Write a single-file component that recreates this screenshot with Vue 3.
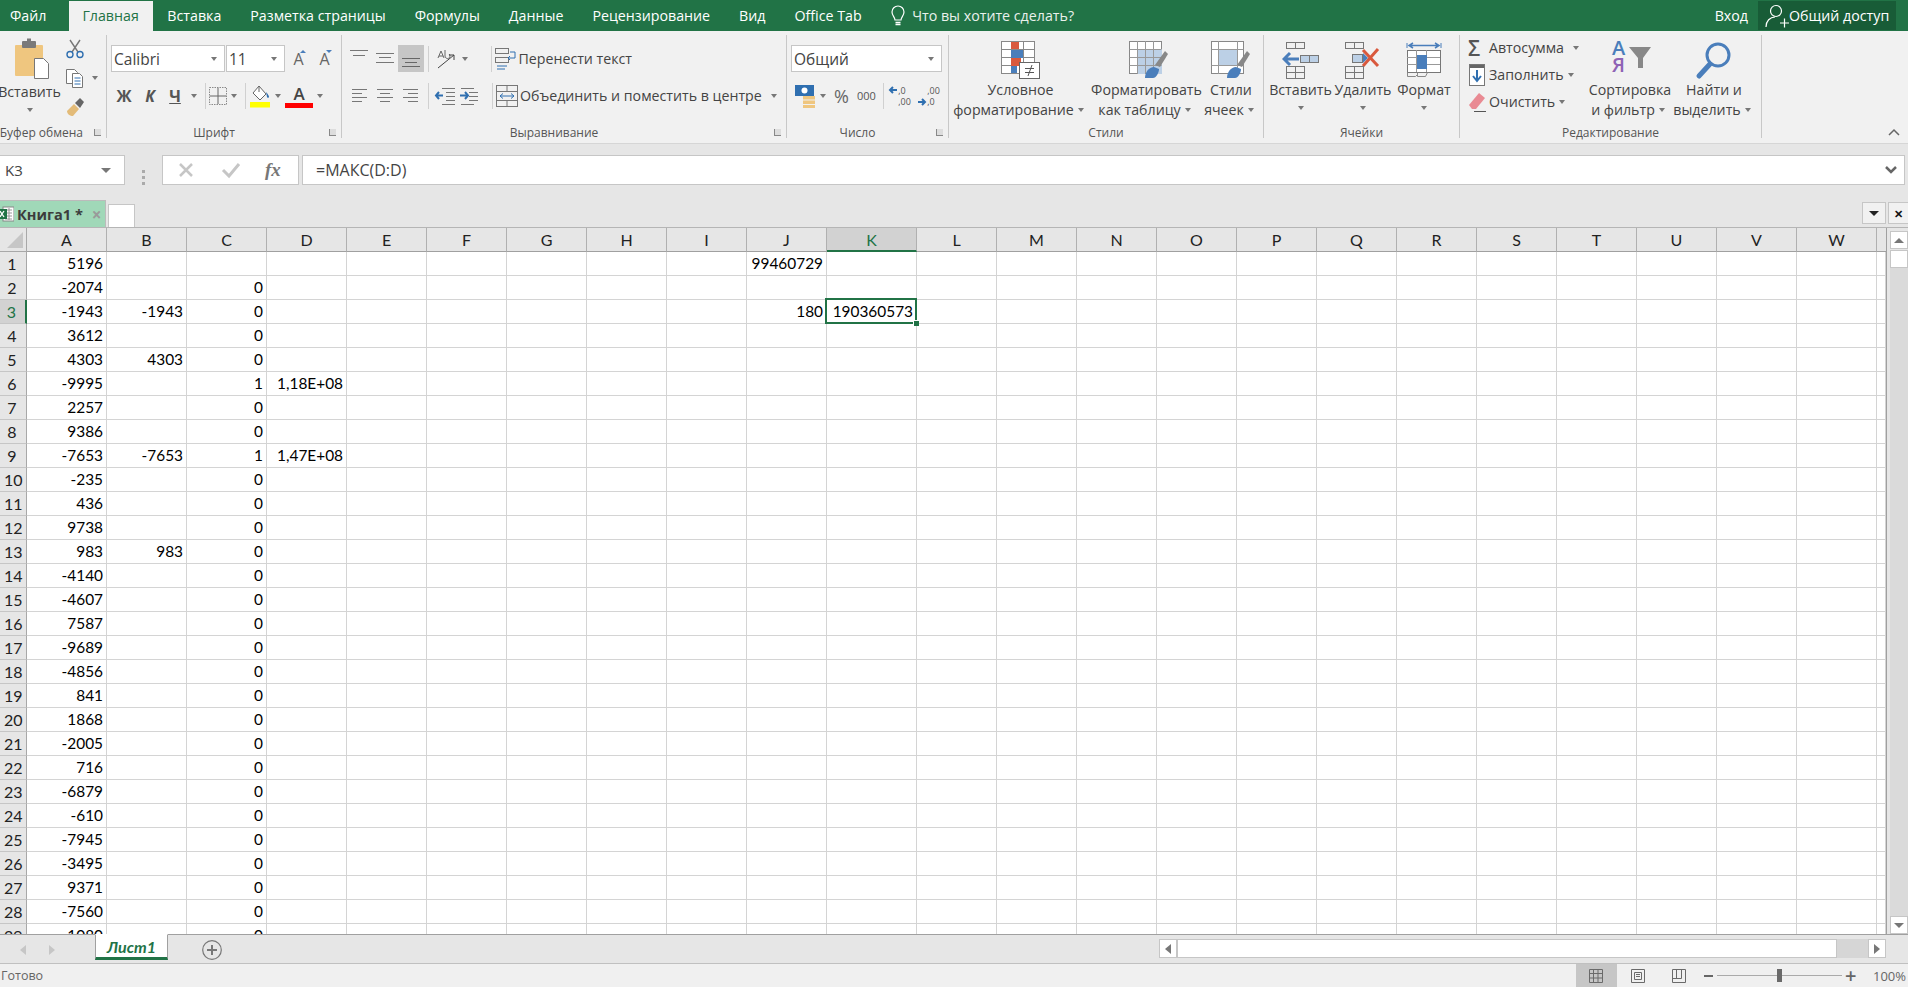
<template>
  <div class="app">
    <!-- title bar -->
    <div class="titlebar">
      <span class="tab first">Файл</span>
      <span class="tab active">Главная</span>
      <span class="tab">Вставка</span>
      <span class="tab">Разметка страницы</span>
      <span class="tab">Формулы</span>
      <span class="tab">Данные</span>
      <span class="tab">Рецензирование</span>
      <span class="tab">Вид</span>
      <span class="tab">Office Tab</span>
      <svg class="lamp" width="16" height="24" viewBox="0 0 16 24" fill="none" stroke="#fff" stroke-width="1.2">
        <path d="M5 16c0-3-3-4-3-8a6 6 0 0 1 12 0c0 4-3 5-3 8z" />
        <path d="M5.5 18.5h5M5.5 20.5h5" stroke-width="1.6" />
      </svg>
      <span class="tell">Что вы хотите сделать?</span>
      <span class="login">Вход</span>
      <div class="share">
        <svg width="24" height="26" viewBox="0 0 24 26" fill="none" stroke="#fff" stroke-width="1.2">
          <circle cx="11" cy="8" r="5.5" />
          <path d="M1 24c0-6 4-10 9-10M15 20h9M19.5 15.5v9" />
        </svg>
        <span>Общий доступ</span>
      </div>
    </div>

    <!-- ribbon -->
    <div class="ribbon">
      <section class="group g-clip">
        <div class="body row-body">
          <div class="big paste">
            <svg width="59" height="42" viewBox="0 0 59 42">
              <rect x="15" y="8" width="28" height="31" rx="1" fill="#efc67f" />
              <rect x="22" y="4" width="14" height="7" rx="1" fill="#7a7a7a" />
              <rect x="27" y="1.500" width="4" height="4" fill="#7a7a7a" />
              <path d="M34.500 21.500h9l5 5v15h-14z" fill="#fff" stroke="#777" />
            </svg>
            <span class="lbl">Вставить</span>
            <i class="caret under"></i>
          </div>
          <div class="clip-tools">
            <svg width="20" height="20" viewBox="0 0 20 20" fill="none" stroke-width="1.4">
              <path d="M5 1l8 12M15 1L7 13" stroke="#777" />
              <circle cx="5" cy="15.500" r="3" stroke="#2f6fb0" />
              <circle cx="15" cy="15.500" r="3" stroke="#2f6fb0" />
            </svg>
            <div class="clip-copy">
              <svg width="20" height="20" viewBox="0 0 20 20" fill="#fff" stroke="#777">
                <path d="M1.500 1.500h8l3 3v11h-11z" />
                <path d="M7.500 5.500h7l3 3v11h-10z" />
                <path d="M9.500 10h6M9.500 13h6M9.500 16h6" stroke="#2f6fb0" />
              </svg>
              <i class="caret"></i>
            </div>
            <svg width="20" height="20" viewBox="0 0 20 20">
              <path d="M2 14l7-7 5 5-6 7c-3 0-6-2-6-5z" fill="#e3bb78" />
              <path d="M10 6l5-5 4 4-4 6z" fill="#666" />
            </svg>
          </div>
        </div>
        <div class="glabel"><span class="clip-name">Буфер обмена</span><i class="launcher"></i></div>
      </section>

      <section class="group g-font">
        <div class="body pad">
          <div class="line">
            <div class="combo font-name"><span>Calibri</span><i class="caret"></i></div>
            <div class="combo font-size"><span>11</span><i class="caret"></i></div>
            <span class="grow-a up">A</span>
            <span class="grow-a down">A</span>
          </div>
          <div class="line second">
            <b class="fmt">Ж</b>
            <b class="fmt it">К</b>
            <b class="fmt un">Ч</b>
            <i class="caret"></i>
            <i class="vsep"></i>
            <svg width="18" height="20" viewBox="0 0 18 20" fill="none" stroke="#8a8a8a" stroke-dasharray="1.500 1">
              <rect x=".5" y="1.500" width="17" height="17" />
              <path d="M9 2v16M1 10h16" stroke="#666" stroke-dasharray="none" />
            </svg>
            <i class="caret"></i>
            <i class="vsep"></i>
            <svg width="22" height="24" viewBox="0 0 22 24">
              <path d="M10 2l7 8-6 6-7-7z" fill="#fff" stroke="#666" />
              <path d="M10 2v6" stroke="#666" />
              <path d="M17 8c2 2 3 4 3 5s-2 1-2 0z" fill="#2f6fb0" />
              <rect x="1" y="18" width="20" height="5.500" fill="#ff0" />
            </svg>
            <i class="caret"></i>
            <span class="font-color">A</span>
            <i class="caret"></i>
          </div>
        </div>
        <div class="glabel shift">Шрифт<i class="launcher"></i></div>
      </section>

      <section class="group g-align">
        <div class="body pad">
          <div class="line">
            <svg width="26" height="27" viewBox="0 0 26 27" stroke="#777"><path d="M4 5.500h18M7 10.500h12" /></svg>
            <svg width="26" height="27" viewBox="0 0 26 27" stroke="#777"><path d="M4 8.500h18M7 12.500h12M4 17.500h18" /></svg>
            <svg class="on" width="26" height="27" viewBox="0 0 26 27" stroke="#666"><path d="M4 13.500h18M7 17.500h12M4 21.500h18" /></svg>
            <i class="vsep ab-sep"></i>
            <svg width="24" height="24" viewBox="0 0 24 24" fill="none" stroke="#777">
              <path d="M4 11l3-7 3 7M5 9h4M11 3v6a2.500 2.500 0 1 0 4-2" stroke="#666" />
              <path d="M4 21L20 8M15 8h5v5" stroke="#444" />
            </svg>
            <i class="caret"></i>
            <i class="vsep wide"></i>
            <svg width="22" height="24" viewBox="0 0 22 24" fill="none" stroke="#777">
              <rect x=".5" y="1.500" width="13" height="5" />
              <rect x=".5" y="10.500" width="13" height="5" />
              <path d="M2 19h10M2 22h8" stroke="#2f6fb0" />
              <path d="M15 5h5v6h-7M15 9l-2 2 2 2" stroke="#2f6fb0" />
            </svg>
            <span class="lbl al-text">Перенести текст</span>
          </div>
          <div class="line second">
            <svg width="26" height="27" viewBox="0 0 26 27" stroke="#777"><path d="M6 7.500h15M6 11.500h10M6 15.500h15M6 19.500h10" /></svg>
            <svg width="26" height="27" viewBox="0 0 26 27" stroke="#777"><path d="M5 7.500h16M8 11.500h10M5 15.500h16M8 19.500h10" /></svg>
            <svg width="26" height="27" viewBox="0 0 26 27" stroke="#777"><path d="M5 7.500h15M10 11.500h10M5 15.500h15M10 19.500h10" /></svg>
            <i class="vsep"></i>
            <svg width="26" height="27" viewBox="0 0 26 27" fill="none">
              <path d="M10 6.500h13M14 10.500h9M14 14.500h9M14 18.500h9M10 22.500h13" stroke="#777" />
              <path d="M11 13.500H4M7 10l-3 3.500L7 17" stroke="#2f6fb0" stroke-width="2" />
            </svg>
            <svg width="26" height="27" viewBox="0 0 26 27" fill="none">
              <path d="M3 6.500h13M3 22.500h13M11 10.500h9M11 14.500h9M11 18.500h9" stroke="#777" />
              <path d="M2 13.500h8M7 10l3 3.500L7 17" stroke="#2f6fb0" stroke-width="2" />
            </svg>
            <i class="vsep wide2"></i>
            <svg width="22" height="24" viewBox="0 0 22 24" fill="none" stroke="#777">
              <rect x=".5" y="1.500" width="21" height="21" />
              <path d="M1 7.500h20M1 16.500h20M11 1v6M11 17v6" />
              <path d="M4 12h14M7 9.500L4 12l3 2.500M15 9.500l3 2.500-3 2.500" stroke="#2f6fb0" />
            </svg>
            <span class="lbl al-text">Объединить и поместить в центре</span>
            <i class="caret merge-caret"></i>
          </div>
        </div>
        <div class="glabel shift">Выравнивание<i class="launcher"></i></div>
      </section>

      <section class="group g-num">
        <div class="body pad">
          <div class="line">
            <div class="combo num-format"><span>Общий</span><i class="caret"></i></div>
          </div>
          <div class="line second">
            <svg class="money" width="22" height="24" viewBox="0 0 22 24">
              <rect x="1" y="1" width="19" height="11" fill="#2f6fb0" />
              <circle cx="10.500" cy="6.500" r="3" fill="#fff" />
              <rect x="9" y="12" width="12" height="3.500" fill="#efc67f" />
              <rect x="9" y="16.500" width="12" height="3.500" fill="#efc67f" />
              <rect x="9" y="21" width="12" height="3" fill="#efc67f" />
            </svg>
            <i class="caret"></i>
            <span class="percent">%</span>
            <span class="thousand">000</span>
            <i class="vsep num-sep"></i>
            <div class="dec">
              <svg width="10" height="10" viewBox="0 0 10 10" fill="none" stroke="#2f6fb0" stroke-width="2"><path d="M9 5H2M5 2L2 5l3 3" /></svg>
              <span class="dec-text">,0<br />,00</span>
            </div>
            <div class="dec right">
              <svg width="10" height="10" viewBox="0 0 10 10" fill="none" stroke="#2f6fb0" stroke-width="2"><path d="M1 5h7M5 2l3 3-3 3" /></svg>
              <span class="dec-text">,00<br />,0</span>
            </div>
          </div>
        </div>
        <div class="glabel shift">Число<i class="launcher"></i></div>
      </section>

      <section class="group g-styles">
        <div class="body row-body">
          <div class="big w143">
            <svg width="40" height="38" viewBox="0 0 40 38">
              <g fill="none" stroke="#888">
                <rect x=".5" y=".5" width="33" height="32" fill="#fff" />
                <path d="M.5 8.500h33M.5 16.500h33M.5 24.500h33M11.500 0v33M22.500 0v33" />
              </g>
              <rect x="10" y="1" width="8" height="7" fill="#d9593d" />
              <rect x="10" y="9" width="12" height="8" fill="#4a7ebb" />
              <rect x="10" y="17" width="10" height="8" fill="#d9593d" />
              <rect x="10" y="25" width="6" height="7" fill="#4a7ebb" />
              <rect x="18.500" y="21.500" width="20" height="16" fill="#fff" stroke="#666" />
              <path d="M24 27.500h9M24 31.500h9M31 24l-4 11" stroke="#555" fill="none" />
            </svg>
            <span class="lbl">Условное</span>
            <span class="lbl">форматирование<i class="caret"></i></span>
          </div>
          <div class="big w109">
            <svg class="nudge" width="40" height="38" viewBox="0 0 40 38">
              <g fill="#fff" stroke="#888">
                <rect x=".5" y=".5" width="32" height="32" />
              </g>
              <rect x="9" y="8" width="24" height="25" fill="#bcd0e6" />
              <path d="M.5 8.500h32M.5 16.500h32M.5 24.500h32M8.500 0v33M16.500 0v33M24.500 0v33" stroke="#999" fill="none" />
              <path d="M26 24l10-14 3 3-8 13z" fill="#888" />
              <path d="M16 37c0-6 4-11 9-11l5 2c0 4-3 9-6 9z" fill="#4a7ebb" />
            </svg>
            <span class="lbl">Форматировать</span>
            <span class="lbl">как таблицу<i class="caret"></i></span>
          </div>
          <div class="big w60">
            <svg width="40" height="38" viewBox="0 0 40 38">
              <rect x=".5" y=".5" width="32" height="32" fill="#fff" stroke="#888" />
              <rect x="7" y="8" width="20" height="17" fill="#bcd0e6" />
              <path d="M.5 8.500h32M.5 24.500h32M7.500 0v33M26.500 0v33" stroke="#999" fill="none" />
              <path d="M26 24l10-14 3 3-8 13z" fill="#888" />
              <path d="M16 37c0-6 4-11 9-11l5 2c0 4-3 9-6 9z" fill="#4a7ebb" />
            </svg>
            <span class="lbl">Стили</span>
            <span class="lbl">ячеек<i class="caret"></i></span>
          </div>
        </div>
        <div class="glabel">Стили</div>
      </section>

      <section class="group g-cells">
        <div class="body row-body">
          <div class="big w61">
            <svg width="38" height="38" viewBox="0 0 38 38" fill="none">
              <rect x="4.500" y="1.500" width="18" height="6" stroke="#777" />
              <path d="M13.500 1v6" stroke="#777" />
              <rect x="18.500" y="14.500" width="18" height="7" fill="#bcd0e6" stroke="#777" />
              <path d="M27.500 14v7" stroke="#777" />
              <path d="M17 18H2M8 12l-6 6 6 6" stroke="#4a7ebb" stroke-width="3" />
              <rect x="4.500" y="25.500" width="18" height="12" stroke="#777" />
              <path d="M4 31.500h19M13.500 25v12" stroke="#777" />
            </svg>
            <span class="lbl">Вставить</span>
            <i class="caret under"></i>
          </div>
          <div class="big w64">
            <svg width="38" height="38" viewBox="0 0 38 38" fill="none">
              <rect x="1.500" y="1.500" width="18" height="6" stroke="#777" />
              <path d="M10.500 1v6" stroke="#777" />
              <rect x="8.500" y="13.500" width="10" height="8" fill="#bcd0e6" stroke="#777" />
              <path d="M19 12l5 5-5 5z" fill="#4a7ebb" />
              <path d="M19 9l15 16M34 8L19 25" stroke="#d9593d" stroke-width="3" />
              <rect x="1.500" y="25.500" width="18" height="12" stroke="#777" />
              <path d="M1 31.500h19M10.500 25v12" stroke="#777" />
            </svg>
            <span class="lbl">Удалить</span>
            <i class="caret under"></i>
          </div>
          <div class="big w58">
            <svg width="38" height="38" viewBox="0 0 38 38" fill="none">
              <path d="M2 2v5M36 2v5" stroke="#4a7ebb" />
              <path d="M4 4.500h30M8 2L4 4.500 8 7M30 2l4 2.500L30 7" stroke="#4a7ebb" stroke-width="1.500" />
              <rect x="2.500" y="9.500" width="33" height="22" fill="#fff" stroke="#777" />
              <path d="M2 16.500h33M2 23.500h33M11.500 9v22M21.500 9v22" stroke="#999" />
              <rect x="12" y="14" width="10" height="14" fill="#4a7ebb" />
              <path d="M2.500 31.500v4h8l2-2v-2M12.500 33.500v2h8l2-4" stroke="#888" />
            </svg>
            <span class="lbl">Формат</span>
            <i class="caret under"></i>
          </div>
        </div>
        <div class="glabel">Ячейки</div>
      </section>

      <section class="group g-edit">
        <div class="body row-body">
          <div class="edit-col">
            <div class="edit-row">
              <span class="sigma">Σ</span>
              <span class="lbl">Автосумма</span>
              <i class="caret sum-caret"></i>
            </div>
            <div class="edit-row">
              <svg width="16" height="22" viewBox="0 0 16 22" fill="none">
                <rect x=".5" y=".5" width="15" height="21" fill="#fff" stroke="#777" />
                <rect x="1" y="1" width="14" height="3" fill="#666" />
                <path d="M8 6v10M4 12l4 5 4-5" stroke="#2f6fb0" stroke-width="2" />
              </svg>
              <span class="lbl">Заполнить<i class="caret"></i></span>
            </div>
            <div class="edit-row">
              <svg width="18" height="20" viewBox="0 0 18 20">
                <path d="M1 13L11 1l6 5L8 17H4z" fill="#e98a93" />
                <path d="M6 19.500h12" stroke="#555" />
              </svg>
              <span class="lbl">Очистить<i class="caret"></i></span>
            </div>
          </div>
          <div class="big w90">
            <div class="sort-icon">
              <span class="sort-a">А</span>
              <span class="sort-z">Я</span>
              <svg width="22" height="21" viewBox="0 0 22 21">
                <path d="M0 0h22l-8 11v10H9V11z" fill="#888" />
              </svg>
            </div>
            <span class="lbl">Сортировка</span>
            <span class="lbl">и фильтр<i class="caret"></i></span>
          </div>
          <div class="big w78">
            <svg width="40" height="38" viewBox="0 0 40 38" fill="none">
              <circle cx="24" cy="14" r="11" stroke="#4a7ebb" stroke-width="3" />
              <path d="M16 23L5 35" stroke="#4a7ebb" stroke-width="5" stroke-linecap="round" />
            </svg>
            <span class="lbl">Найти и</span>
            <span class="lbl">выделить<i class="caret"></i></span>
          </div>
        </div>
        <div class="glabel">Редактирование</div>
      </section>

      <svg class="collapse" width="12" height="8" viewBox="0 0 12 8" fill="none" stroke="#666" stroke-width="1.500">
        <path d="M1 7l5-5 5 5" />
      </svg>
    </div>

    <!-- formula bar -->
    <div class="formula">
      <div class="namebox"><span>K3</span><i class="caret dark"></i></div>
      <div class="dots"><i></i><i></i><i></i></div>
      <div class="fx-box">
        <svg width="18" height="18" viewBox="0 0 18 18" fill="none" stroke="#c6c6c6" stroke-width="2.500">
          <path d="M3 3l12 12M15 3L3 15" />
        </svg>
        <svg width="20" height="18" viewBox="0 0 20 18" fill="none" stroke="#c6c6c6" stroke-width="3">
          <path d="M2 9l6 6L18 3" />
        </svg>
        <span class="fx">fx</span>
      </div>
      <div class="input">
        <span>=МАКС(D:D)</span>
        <svg width="14" height="10" viewBox="0 0 14 10" fill="none" stroke="#666" stroke-width="2.500">
          <path d="M2 2l5 5 5-5" />
        </svg>
      </div>
    </div>

    <!-- workbook tabs -->
    <div class="doctabs">
      <div class="doc">
        <svg width="14" height="16" viewBox="0 0 14 16">
          <rect x="3" y="1" width="11" height="14" fill="#fff" stroke="#888" />
          <path d="M5 4h7M5 7h7M5 10h7M5 13h7M9 2v12" stroke="#999" />
          <rect x="-3" y="3" width="10" height="10" fill="#217346" />
          <path d="M0 5l4 6M4 5l-4 6" stroke="#fff" stroke-width="1.300" />
        </svg>
        <b>Книга1 *</b>
        <span class="doc-close">×</span>
      </div>
      <div class="doc-new"></div>
      <div class="doc-btn down"><i class="caret black"></i></div>
      <div class="doc-btn close">✕</div>
    </div>

    <!-- sheet -->
    <div class="sheet">
      <div class="grid">
        <div class="corner"><i></i></div>
        <div
          v-for="col in columns"
          :key="col"
          class="colhead"
          :class="{ current: col === 'K' }"
        >{{ col }}</div>
        <div class="colhead tail"></div>
        <template v-for="row in rowCount" :key="row">
          <div class="rowhead" :class="{ current: row === 3 }">{{ row }}</div>
          <div
            v-for="col in columns"
            :key="col"
            class="cell"
            :class="{ selected: col === 'K' && row === 3 }"
          >{{ cellText(col, row) }}</div>
          <div class="cell"></div>
        </template>
      </div>
      <div class="vscroll">
        <div class="sbtn"><i class="tri up"></i></div>
        <div class="vthumb"></div>
        <div class="vtrack"></div>
        <div class="sbtn"><i class="tri dn"></i></div>
      </div>
    </div>

    <!-- sheet tabs -->
    <div class="tabsbar">
      <i class="nav left"></i>
      <i class="nav right"></i>
      <div class="sheettab">Лист1</div>
      <div class="addsheet">
        <svg width="20" height="20" viewBox="0 0 20 20" fill="none" stroke="#777">
          <circle cx="10" cy="10" r="9.300" stroke-width="1.200" />
          <path d="M5 10h10M10 5v10" stroke-width="2" />
        </svg>
      </div>
      <div class="hscroll">
        <div class="sbtn h"><i class="nav left dark"></i></div>
        <div class="hthumb"></div>
        <div class="htrack"></div>
        <div class="sbtn h"><i class="nav right dark"></i></div>
      </div>
    </div>

    <!-- status bar -->
    <div class="status">
      <span class="ready">Готово</span>
      <div class="view on">
        <svg width="14" height="14" viewBox="0 0 14 14" fill="none" stroke="#6a6a6a"><path d="M.5.5h13v13H.5zM.5 4.500h13M.5 9h13M4.500 0v14M9 0v14" /></svg>
      </div>
      <div class="view">
        <svg width="14" height="14" viewBox="0 0 14 14" fill="none" stroke="#6a6a6a"><path d="M.5.5h13v13H.5zM3.500 3.500h7v7h-7zM5 5.500h4M5 7.500h4" /></svg>
      </div>
      <div class="view">
        <svg width="14" height="14" viewBox="0 0 14 14" fill="none" stroke="#6a6a6a"><path d="M.5.5h13v13H.5zM.5 9.500h9v-9M4.500 0v9" /></svg>
      </div>
      <div class="zoom">
        <i class="minus"></i>
        <div class="slider"><i></i></div>
        <span class="plus">+</span>
      </div>
      <span class="percent-zoom">100%</span>
    </div>
  </div>
</template>

<script setup>
const columns = 'ABCDEFGHIJKLMNOPQRSTUVW'.split('');
const rowCount = 29;

const colA = [
  5196, -2074, -1943, 3612, 4303, -9995, 2257, 9386, -7653, -235, 436, 9738, 983, -4140, -4607,
  7587, -9689, -4856, 841, 1868, -2005, 716, -6879, -610, -7945, -3495, 9371, -7560, -1080,
];
const sparse = {
  B: { 3: -1943, 5: 4303, 9: -7653, 13: 983 },
  D: { 6: '1,18E+08', 9: '1,47E+08' },
  J: { 1: 99460729, 3: 180 },
  K: { 3: 190360573 },
};

const cellText = (col, row) => {
  if (col === 'A') return colA[row - 1];
  if (col === 'C') {
    if (row === 1) return '';
    return row === 6 || row === 9 ? 1 : 0;
  }
  return sparse[col]?.[row] ?? '';
};
</script>

<style>
html,
body {
  margin: 0;
  overflow: hidden;
  background: #f1f1f1;
}
</style>

<style scoped>
.app {
  width: 1908px;
  height: 987px;
  display: flex;
  flex-direction: column;
  overflow: hidden;
  font-family: "Open Sans", "Noto Sans", sans-serif;
  font-size: 14.2px;
  color: #444;
}

i {
  display: block;
  font-style: normal;
}

/* title bar */
.titlebar {
  height: 31px;
  flex: none;
  display: flex;
  align-items: center;
  background: #217346;
  color: #fff;
  font-size: 14.23px;
}

.tab {
  height: 31px;
  line-height: 32px;
  padding: 0 14.5px;
  white-space: nowrap;
}

.tab.first {
  padding: 0 23px 0 10px;
}

.tab.active {
  background: #f1f1f1;
  color: #217346;
  height: 30px;
  margin-top: 1px;
  line-height: 30px;
  padding: 0 14px 0 13px;
}

.lamp {
  margin-left: 14px;
}

.tell {
  margin-left: 6px;
  opacity: 0.9;
}

.login {
  margin-left: auto;
}

.share {
  margin: 0 12px 0 10px;
  height: 29px;
  width: 138px;
  padding-left: 7px;
  box-sizing: border-box;
  display: flex;
  align-items: center;
  background: #185c37;
  white-space: nowrap;
}

/* ribbon */
.ribbon {
  height: 113px;
  flex: none;
  box-sizing: border-box;
  padding: 4px 0 5px;
  display: flex;
  position: relative;
  background: #f1f1f1;
  border-bottom: 1px solid #d6d6d6;
}

.group {
  box-sizing: border-box;
  border-right: 1px solid #c8c8c8;
  display: flex;
  flex-direction: column;
  flex: none;
}

.g-clip { width: 107px; }
.g-font { width: 235px; }
.g-align { width: 445px; }
.g-num { width: 162px; }
.g-styles { width: 315px; }
.g-cells { width: 196px; }
.g-edit { width: 302px; }

.body {
  flex: 1;
  min-height: 0;
}

.row-body {
  display: flex;
}

.pad {
  padding-top: 10px;
}

.glabel {
  height: 16px;
  line-height: 16px;
  margin-bottom: -3px;
  position: relative;
  text-align: center;
  font-size: 12px;
  color: #555;
  white-space: nowrap;
}

.glabel.shift {
  padding-right: 20px;
}

.launcher {
  position: absolute;
  right: 5px;
  top: 4px;
  width: 6px;
  height: 6px;
  border-left: 1px solid #888;
  border-bottom: 1px solid #888;
  background: #ddd;
}

.clip-name {
  position: absolute;
  right: 23px;
}

.line {
  display: flex;
  align-items: center;
  height: 27px;
}

.line.second {
  margin-top: 10px;
}

.caret {
  flex: none;
  width: 0;
  height: 0;
  margin: 0 4px;
  border-left: 3.500px solid transparent;
  border-right: 3.500px solid transparent;
  border-top: 4px solid #777;
}

.caret.under {
  margin-top: 6px;
}

.caret.dark {
  border-left-width: 5px;
  border-right-width: 5px;
  border-top-width: 5px;
  border-top-color: #777;
}

.caret.black {
  border-top-color: #222;
  border-left-width: 5px;
  border-right-width: 5px;
  border-top-width: 5px;
}

.vsep {
  flex: none;
  width: 1px;
  height: 26px;
  margin: 0 3.500px;
  background: #d0d0d0;
}

.big {
  flex: none;
  display: flex;
  flex-direction: column;
  align-items: center;
  padding-top: 5px;
}

.big > svg,
.sort-icon {
  height: 40px;
  flex: none;
}

.big .lbl {
  line-height: 20px;
  white-space: nowrap;
  display: flex;
  align-items: center;
}

.nudge {
  margin-left: 4px;
}

.lbl {
  white-space: nowrap;
}

.w143 { width: 143px; }
.w109 { width: 109px; }
.w60 { width: 60px; }
.w61 { width: 61px; margin-left: 6px; }
.w64 { width: 64px; }
.w58 { width: 58px; }
.w90 { width: 90px; }
.w78 { width: 78px; }

/* clipboard */
.paste {
  width: 59px;
  padding-top: 2px;
}

.paste > svg {
  height: 42px;
}

.paste .lbl {
  margin-top: 3px;
}

.clip-tools {
  margin: 4px 0 0 6px;
  display: flex;
  flex-direction: column;
  gap: 9px;
}

.clip-copy {
  display: flex;
  align-items: center;
  gap: 3px;
}

/* font group */
.g-font .line {
  padding-left: 4px;
}

.combo {
  box-sizing: border-box;
  height: 27px;
  display: flex;
  align-items: center;
  justify-content: space-between;
  padding: 0 3px 0 2px;
  background: #fff;
  border: 1px solid #c6c6c6;
  font-size: 15.5px;
}

.font-name {
  width: 114px;
  margin-right: 1px;
}

.font-size {
  width: 59px;
}

.grow-a {
  width: 25px;
  margin-left: 1px;
  font-size: 16px;
  text-align: center;
  color: #666;
  position: relative;
}

.grow-a::after {
  content: "";
  position: absolute;
  top: 2px;
  right: 5px;
  border-left: 3px solid transparent;
  border-right: 3px solid transparent;
}

.grow-a.up::after {
  border-bottom: 3px solid #4a7ebb;
}

.grow-a.down::after {
  border-top: 3px solid #4a7ebb;
}

.fmt {
  width: 26px;
  text-align: center;
  font-size: 16px;
  color: #555;
}

.fmt.it {
  font-style: italic;
}

.fmt.un {
  width: 24px;
  text-decoration: underline;
}

.font-color {
  width: 28px;
  text-align: center;
  font-size: 17px;
  font-weight: 600;
  line-height: 20px;
  color: #444;
  border-bottom: 5px solid #f00;
  box-sizing: border-box;
  height: 24px;
}

/* alignment */
.g-align .line {
  padding-left: 4px;
}

.on {
  background: #c6c6c6;
}

.vsep.ab-sep {
  margin-right: 5px;
}

.vsep.wide {
  margin: 0 3px 0 19px;
}

.vsep.wide2 {
  margin: 0 3px 0 8px;
}

.al-text {
  margin-left: 2px;
}

.merge-caret {
  margin-left: 9px;
}

/* number */
.g-num .line {
  padding-left: 4px;
}

.num-format {
  width: 151px;
}

.money {
  margin-left: 3px;
}

.percent {
  margin-left: 4px;
  font-size: 18px;
  color: #666;
}

.thousand {
  margin-left: 8px;
  font-size: 11px;
  color: #555;
}

.vsep.num-sep {
  margin-left: 7px;
}

.dec {
  display: flex;
  align-items: flex-start;
  width: 24px;
  margin-left: 1px;
}

.dec.right {
  align-items: flex-end;
  margin-left: 5px;
}

.dec-text {
  font-size: 9px;
  line-height: 11px;
  color: #555;
}

/* editing */
.edit-col {
  width: 125px;
  box-sizing: border-box;
  padding-left: 8px;
  margin-top: -1px;
  flex: none;
}

.edit-row {
  height: 27px;
  display: flex;
  align-items: center;
}

.edit-row > svg,
.sigma {
  width: 18px;
  flex: none;
}

.edit-row .lbl {
  margin-left: 3px;
  display: flex;
  align-items: center;
}

.sigma {
  font-size: 21px;
  font-weight: 600;
  line-height: 20px;
  color: #555;
}

.sum-caret {
  margin-left: 9px;
}

.sort-icon {
  width: 40px;
  position: relative;
}

.sort-icon svg {
  position: absolute;
  left: 19px;
  top: 7px;
}

.sort-a,
.sort-z {
  position: absolute;
  left: 2px;
  font-size: 20px;
  line-height: 17px;
  font-weight: 600;
}

.sort-a {
  top: -1px;
  color: #4a7ebb;
}

.sort-z {
  top: 16px;
  color: #8e63b5;
}

.collapse {
  position: absolute;
  right: 8px;
  top: 97px;
}

/* formula bar */
.formula {
  height: 56px;
  flex: none;
  box-sizing: border-box;
  padding: 11px 3px 0 0;
  display: flex;
  background: #e6e6e6;
}

.namebox,
.fx-box,
.input {
  box-sizing: border-box;
  height: 30px;
  background: #fff;
  border: 1px solid #c6c6c6;
  display: flex;
  align-items: center;
}

.namebox {
  width: 125px;
  padding: 0 9px 0 5px;
  justify-content: space-between;
  font-size: 15px;
  border-left: none;
}

.dots {
  width: 37px;
  display: flex;
  flex-direction: column;
  align-items: center;
  justify-content: center;
  gap: 3px;
}

.dots i {
  width: 3px;
  height: 3px;
  background: #aaa;
}

.fx-box {
  width: 137px;
  padding-left: 14px;
  gap: 26px;
}

.fx {
  font-family: "Liberation Serif", serif;
  font-style: italic;
  font-weight: 700;
  font-size: 19px;
  color: #777;
  margin-left: -2px;
}

.input {
  flex: 1;
  margin-left: 3px;
  padding: 0 6px 0 13px;
  justify-content: space-between;
  font-size: 16px;
}

/* workbook tabs */
.doctabs {
  height: 28px;
  flex: none;
  box-sizing: border-box;
  display: flex;
  align-items: flex-end;
  background: #e6e6e6;
  border-bottom: 1px solid #b5b5b5;
}

.doc {
  box-sizing: border-box;
  width: 106px;
  height: 27px;
  display: flex;
  align-items: center;
  background: #a0d8b8;
  border-top: 1px solid #bbb;
  border-right: 1px solid #bbb;
  font-size: 14.6px;
  color: #3c3c3c;
}

.doc b {
  margin-left: 3px;
  white-space: nowrap;
}

.doc-close {
  margin-left: 9px;
  font-size: 17px;
  font-weight: 700;
  color: #9a9a9a;
}

.doc-new {
  box-sizing: border-box;
  width: 27px;
  height: 23px;
  margin-left: 2px;
  background: #fff;
  border: 1px solid #c6c6c6;
  border-bottom: none;
}

.doc-btn {
  box-sizing: border-box;
  height: 22px;
  margin-bottom: 3px;
  display: flex;
  align-items: center;
  justify-content: center;
  background: #f1f1f1;
  border: 1px solid #c6c6c6;
}

.doc-btn.down {
  width: 24px;
  margin-left: auto;
}

.doc-btn.close {
  width: 20px;
  margin-left: 2px;
  border-right: none;
  font-size: 11px;
  font-weight: 900;
  color: #111;
}

/* sheet */
.sheet {
  height: 706px;
  flex: none;
  display: flex;
  overflow: hidden;
  background: #e6e6e6;
}

.grid {
  width: 1887px;
  box-sizing: border-box;
  flex: none;
  display: grid;
  grid-template-columns: 27px repeat(10, 80px) 90px repeat(12, 80px) 9px;
  grid-auto-rows: 24px;
  align-content: start;
  border-right: 1px solid #a0a0a0;
  font-family: Lato, "Liberation Sans", sans-serif;
  font-size: 15.4px;
  color: #000;
}

.corner {
  box-sizing: border-box;
  position: relative;
  border-right: 1px solid #a8a8a8;
  border-bottom: 1px solid #a8a8a8;
}

.corner i {
  position: absolute;
  right: 3px;
  bottom: 3px;
  border-left: 16px solid transparent;
  border-bottom: 16px solid #c6c6c6;
}

.colhead {
  box-sizing: border-box;
  line-height: 24px;
  text-align: center;
  background: #e6e6e6;
  border-right: 1px solid #b0b0b0;
  border-bottom: 1px solid #a0a0a0;
  color: #222;
  font-size: 16px;
}

.colhead.tail {
  border-right: none;
}

.colhead.current {
  background: #d2d2d2;
  color: #217346;
  border-bottom: 2px solid #217346;
}

.rowhead {
  box-sizing: border-box;
  background: #e6e6e6;
  padding: 0 6px 0 4px;
  line-height: 24px;
  border-right: 1px solid #a8a8a8;
  border-bottom: 1px solid #c6c6c6;
  color: #222;
  font-size: 16px;
  text-align: center;
}

.rowhead.current {
  background: #d2d2d2;
  color: #217346;
  border-right: 2px solid #217346;
}

.cell {
  box-sizing: border-box;
  position: relative;
  line-height: 23px;
  padding-right: 3px;
  text-align: right;
  background: #fff;
  border-right: 1px solid #d4d4d4;
  border-bottom: 1px solid #d4d4d4;
}

.cell.selected::after {
  content: "";
  position: absolute;
  left: -2px;
  right: -1px;
  top: -2px;
  bottom: -1px;
  border: 2px solid #217346;
}

.cell.selected::before {
  content: "";
  position: absolute;
  z-index: 1;
  right: -3px;
  bottom: -3px;
  width: 5px;
  height: 5px;
  background: #217346;
  border: 1px solid #fff;
  border-right: none;
  border-bottom: none;
}

.vscroll {
  width: 18px;
  margin-left: 3px;
  padding-top: 3px;
  box-sizing: border-box;
  display: flex;
  flex-direction: column;
}

.sbtn {
  box-sizing: border-box;
  height: 18px;
  flex: none;
  display: flex;
  align-items: center;
  justify-content: center;
  background: #fff;
  border: 1px solid #c6c6c6;
}

.vthumb {
  height: 18px;
  flex: none;
  margin-top: 1px;
  background: #fff;
  border: 1px solid #c6c6c6;
  box-sizing: border-box;
}

.vtrack {
  flex: 1;
  background: #dadada;
}

.tri {
  border-left: 5px solid transparent;
  border-right: 5px solid transparent;
}

.tri.up {
  border-bottom: 5px solid #777;
}

.tri.dn {
  border-top: 5px solid #777;
}

/* sheet tabs */
.tabsbar {
  height: 30px;
  flex: none;
  box-sizing: border-box;
  display: flex;
  background: #e6e6e6;
  border-top: 1px solid #a0a0a0;
  border-bottom: 1px solid #c0c0c0;
  position: relative;
}

.nav {
  flex: none;
  width: 0;
  height: 0;
  border-top: 5px solid transparent;
  border-bottom: 5px solid transparent;
}

.nav.left {
  border-right: 6px solid #c6c6c6;
}

.nav.right {
  border-left: 6px solid #c6c6c6;
}

.tabsbar > .nav {
  margin-top: 10px;
}

.tabsbar > .nav.left {
  margin-left: 20px;
}

.tabsbar > .nav.right {
  margin-left: 23px;
}

.nav.dark.left {
  border-right-color: #777;
}

.nav.dark.right {
  border-left-color: #777;
}

.sheettab {
  box-sizing: border-box;
  width: 73px;
  height: 26px;
  margin-top: -1px;
  margin-left: 40px;
  text-align: center;
  line-height: 23px;
  background: #fff;
  border: 1px solid #a0a0a0;
  border-top-color: #fff;
  border-bottom: 3px solid #217346;
  color: #217346;
  font-family: Lato, sans-serif;
  font-weight: 700;
  font-style: italic;
  font-size: 16px;
}

.addsheet {
  margin: 5px 0 0 34px;
}

.hscroll {
  position: absolute;
  left: 1159px;
  right: 22px;
  top: 4px;
  height: 19px;
  display: flex;
}

.sbtn.h {
  width: 18px;
  height: 19px;
}

.hthumb {
  flex: 1;
  background: #fff;
  border: 1px solid #c6c6c6;
  box-sizing: border-box;
}

.htrack {
  width: 31px;
  background: #d6d6d6;
}

/* status bar */
.status {
  height: 23px;
  flex: none;
  display: flex;
  align-items: center;
  background: #f0f0f0;
  color: #666;
  font-size: 12.5px;
}

.ready {
  margin-left: 1px;
  margin-right: auto;
}

.view {
  width: 41.500px;
  height: 23px;
  display: flex;
  align-items: center;
  justify-content: center;
}

.view.on {
  background: #c6c6c6;
}

.zoom {
  width: 172px;
  margin-left: 1px;
  display: flex;
  align-items: center;
}

.minus {
  width: 9px;
  height: 2px;
  margin-left: 3px;
  background: #666;
}

.slider {
  width: 125px;
  height: 1px;
  margin-left: 4px;
  background: #aaa;
  position: relative;
}

.slider i {
  position: absolute;
  left: 60px;
  top: -6px;
  width: 5px;
  height: 13px;
  background: #6a6a6a;
}

.plus {
  margin-left: 3px;
  font-size: 20px;
  font-weight: 600;
  line-height: 20px;
}

.percent-zoom {
  width: 35px;
  font-size: 13px;
}
</style>
